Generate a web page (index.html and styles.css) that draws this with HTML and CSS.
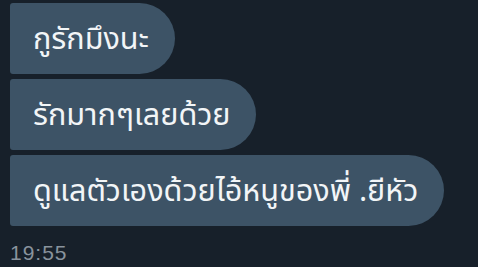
FILE: index.html
```html
<!DOCTYPE html>
<html lang="th">
<head>
<meta charset="utf-8">
<link rel="stylesheet" href="styles.css">
</head>
<body>
<div class="chat">
  <div class="bubble">กูรักมึงนะ</div>
  <div class="bubble">รักมากๆเลยด้วย</div>
  <div class="bubble">ดูแลตัวเองด้วยไอ้หนูของพี่ .ยีหัว</div>
  <div class="time">19:55</div>
</div>
</body>
</html>
```
FILE: styles.css
```css
html, body {
  margin: 0;
  background: #17202a;
  width: 478px;
  height: 267px;
  overflow: hidden;
}
.chat {
  display: flex;
  flex-direction: column;
  align-items: flex-start;
  padding: 3px 0 0 10px;
  gap: 5px;
}
.bubble {
  height: 71px;
  display: flex;
  align-items: center;
  box-sizing: border-box;
  padding: 3px 26px 0 23px;
  background: #3d5366;
  color: #f2f5f7;
  border-radius: 3px 36px 36px 3px;
  font-family: "Noto Sans Thai", "Noto Sans", sans-serif;
  font-size: 30.6px;
  white-space: nowrap;
}
.time {
  margin-top: 11px;
  font-family: "Liberation Sans", Arial, sans-serif;
  font-size: 21px;
  letter-spacing: 1px;
  line-height: 21px;
  color: #89939d;
}
```
